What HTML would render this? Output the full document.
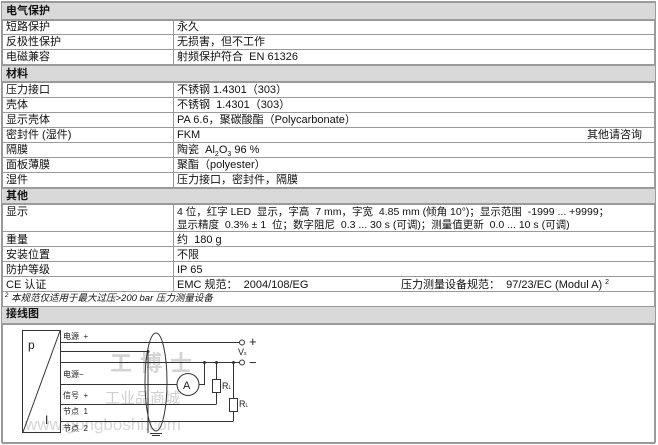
<!DOCTYPE html>
<html><head><meta charset="utf-8"><style>
body{margin:0;width:658px;height:445px;background:#fff;position:relative;overflow:hidden;font-family:"Liberation Sans","Noto Sans CJK SC",sans-serif;font-size:11px;color:#111}
.h{position:absolute;left:2px;width:653px;background:#d9d9d9;font-weight:bold;box-sizing:border-box;padding-left:4px;line-height:16px}
.l{position:absolute;left:2px;width:653px;height:1px;background:#9a9a9a}
.t{position:absolute;left:2px;width:653px;height:2px;background:#9a9a9a}
.c{position:absolute;white-space:nowrap;line-height:14px}
.a{left:6px}.b{left:177px}
.sb{font-size:7px;position:relative;top:3px;line-height:0}
.sp{font-size:7px;position:relative;top:-4px;line-height:0}
</style></head><body>
<div style="position:absolute;left:1px;top:1px;width:2px;height:442px;background:#9a9a9a"></div>
<div style="position:absolute;left:654px;top:1px;width:2px;height:442px;background:#9a9a9a"></div>
<div class="t" style="top:1px"></div>
<div class="h" style="top:3px;height:16px">电气保护</div>
<div class="t" style="top:19px"></div>
<div class="c a" style="top:20px">短路保护</div><div class="c b" style="top:20px">永久</div>
<div class="l" style="top:34px"></div>
<div class="c a" style="top:35px">反极性保护</div><div class="c b" style="top:35px">无损害，但不工作</div>
<div class="l" style="top:49px"></div>
<div class="c a" style="top:50px">电磁兼容</div><div class="c b" style="top:50px">射频保护符合&nbsp; EN 61326</div>
<div class="t" style="top:64px"></div>
<div class="h" style="top:66px;height:15px">材料</div>
<div class="t" style="top:81px"></div>
<div class="c a" style="top:83px">压力接口</div><div class="c b" style="top:83px">不锈钢 1.4301（303）</div>
<div class="l" style="top:97px"></div>
<div class="c a" style="top:98px">壳体</div><div class="c b" style="top:98px">不锈钢&nbsp; 1.4301（303）</div>
<div class="l" style="top:112px"></div>
<div class="c a" style="top:113px">显示壳体</div><div class="c b" style="top:113px">PA 6.6，聚碳酸酯（Polycarbonate）</div>
<div class="l" style="top:127px"></div>
<div class="c a" style="top:128px">密封件 (湿件)</div><div class="c b" style="top:128px">FKM</div><div class="c" style="top:128px;left:587px">其他请咨询</div>
<div class="l" style="top:142px"></div>
<div class="c a" style="top:143px">隔膜</div><div class="c b" style="top:143px">陶瓷&nbsp; Al<span class="sb">2</span>O<span class="sb">3</span> 96 %</div>
<div class="l" style="top:157px"></div>
<div class="c a" style="top:158px">面板薄膜</div><div class="c b" style="top:158px">聚酯（polyester）</div>
<div class="l" style="top:172px"></div>
<div class="c a" style="top:173px">湿件</div><div class="c b" style="top:173px">压力接口，密封件，隔膜</div>
<div class="t" style="top:187px"></div>
<div class="h" style="top:189px;height:14px;line-height:14px">其他</div>
<div class="t" style="top:203px"></div>
<div class="c a" style="top:205px">显示</div>
<div class="c b" style="top:205px;font-size:10.5px">4 位，红字 LED&nbsp; 显示，字高&nbsp; 7 mm，字宽&nbsp; 4.85 mm (倾角 10°)；显示范围&nbsp; -1999 ... +9999；</div>
<div class="c b" style="top:218px;font-size:10.5px">显示精度&nbsp; 0.3% ± 1&nbsp; 位；数字阻尼&nbsp; 0.3 ... 30 s (可调)；测量值更新&nbsp; 0.0 ... 10 s (可调)</div>
<div class="l" style="top:231px"></div>
<div class="c a" style="top:233px">重量</div><div class="c b" style="top:233px">约&nbsp; 180 g</div>
<div class="l" style="top:246px"></div>
<div class="c a" style="top:248px">安装位置</div><div class="c b" style="top:248px">不限</div>
<div class="l" style="top:261px"></div>
<div class="c a" style="top:263px">防护等级</div><div class="c b" style="top:263px">IP 65</div>
<div class="l" style="top:276px"></div>
<div class="c a" style="top:278px">CE 认证</div><div class="c b" style="top:278px">EMC 规范：&nbsp; 2004/108/EG</div>
<div class="c" style="top:278px;left:401px">压力测量设备规范：&nbsp; 97/23/EC (Modul A) <span class="sp">2</span></div>
<div class="l" style="top:291px"></div>
<div class="c" style="top:292px;left:5px;font-size:9.5px;font-style:italic"><span class="sp" style="font-size:6px">2</span> 本规范仅适用于最大过压&gt;200 bar 压力测量设备</div>
<div class="l" style="top:306px"></div>
<div class="h" style="top:307px;height:16px;line-height:15px">接线图</div>
<div class="t" style="top:323px"></div>
<div style="position:absolute;left:173px;top:19px;width:1px;height:45px;background:#9a9a9a"></div>
<div style="position:absolute;left:173px;top:82px;width:1px;height:105px;background:#9a9a9a"></div>
<div style="position:absolute;left:173px;top:205px;width:1px;height:87px;background:#9a9a9a"></div>
<div class="l" style="top:442px;height:2px"></div>
<div class="c" style="left:110px;top:357px;font-size:22px;color:#d4d4d4;font-weight:bold;letter-spacing:8px">工博士</div>
<div class="c" style="left:105px;top:392px;font-size:15px;color:#cfcfcf">工业品商城</div>
<div class="c" style="left:25px;top:418px;font-size:17px;color:#d6d6d6">www.gongboshi.com</div>
<svg style="position:absolute;left:0;top:0" width="658" height="445">
<g stroke="#333" stroke-width="1" fill="none">
<rect x="22.5" y="330.5" width="38" height="102"/>
<line x1="60" y1="331" x2="23" y2="432"/>
<line x1="61" y1="342.5" x2="239" y2="342.5"/>
<line x1="61" y1="351.5" x2="148" y2="351.5"/>
<line x1="61" y1="362.5" x2="239" y2="362.5"/>
<line x1="61" y1="384.5" x2="177" y2="384.5"/>
<path d="M199 384.5 H204.5 V362.5"/>
<line x1="61" y1="404.5" x2="216" y2="404.5"/>
<path d="M216.5 362.5 V379 M216.5 393 V404.5"/>
<rect x="212.5" y="379.5" width="8" height="13"/>
<line x1="61" y1="421.5" x2="233" y2="421.5"/>
<path d="M233.5 362.5 V398 M233.5 411 V421.5"/>
<rect x="229.5" y="398.5" width="8" height="13"/>
<circle cx="188" cy="384.5" r="11"/>
<ellipse cx="156" cy="382" rx="11" ry="49"/>
<line x1="148" y1="351.5" x2="148" y2="433"/>
<line x1="150" y1="433.5" x2="162" y2="433.5"/>
<line x1="152" y1="435.5" x2="160" y2="435.5"/>
<circle cx="242" cy="342.5" r="2.5"/>
<circle cx="242" cy="362.5" r="2.5"/>
</g>
<g fill="#333"><circle cx="148" cy="351.5" r="1.5"/><circle cx="204.5" cy="362.5" r="1.5"/><circle cx="216.5" cy="362.5" r="1.5"/><circle cx="233.5" cy="362.5" r="1.5"/></g>
<g font-family="Liberation Sans,Noto Sans CJK SC,sans-serif" fill="#222">
<text x="28" y="349" font-size="12">p</text>
<text x="45" y="424" font-size="12">I</text>
<text x="63" y="339" font-size="8">电源&#160; +</text>
<text x="63" y="377" font-size="8">电源−</text>
<text x="63" y="398" font-size="8">信号&#160; +</text>
<text x="63" y="414" font-size="8">节点&#160; 1</text>
<text x="63" y="431" font-size="8">节点&#160; 2</text>
<text x="183" y="389" font-size="11">A</text>
<text x="222" y="389" font-size="9">R<tspan font-size="5">L</tspan></text>
<text x="239" y="407" font-size="9">R<tspan font-size="5">L</tspan></text>
<text x="238" y="355" font-size="9">V<tspan font-size="5">s</tspan></text>
<text x="249" y="346" font-size="13">+</text>
<text x="249" y="367" font-size="13">−</text>
</g>
</svg>
</body></html>
